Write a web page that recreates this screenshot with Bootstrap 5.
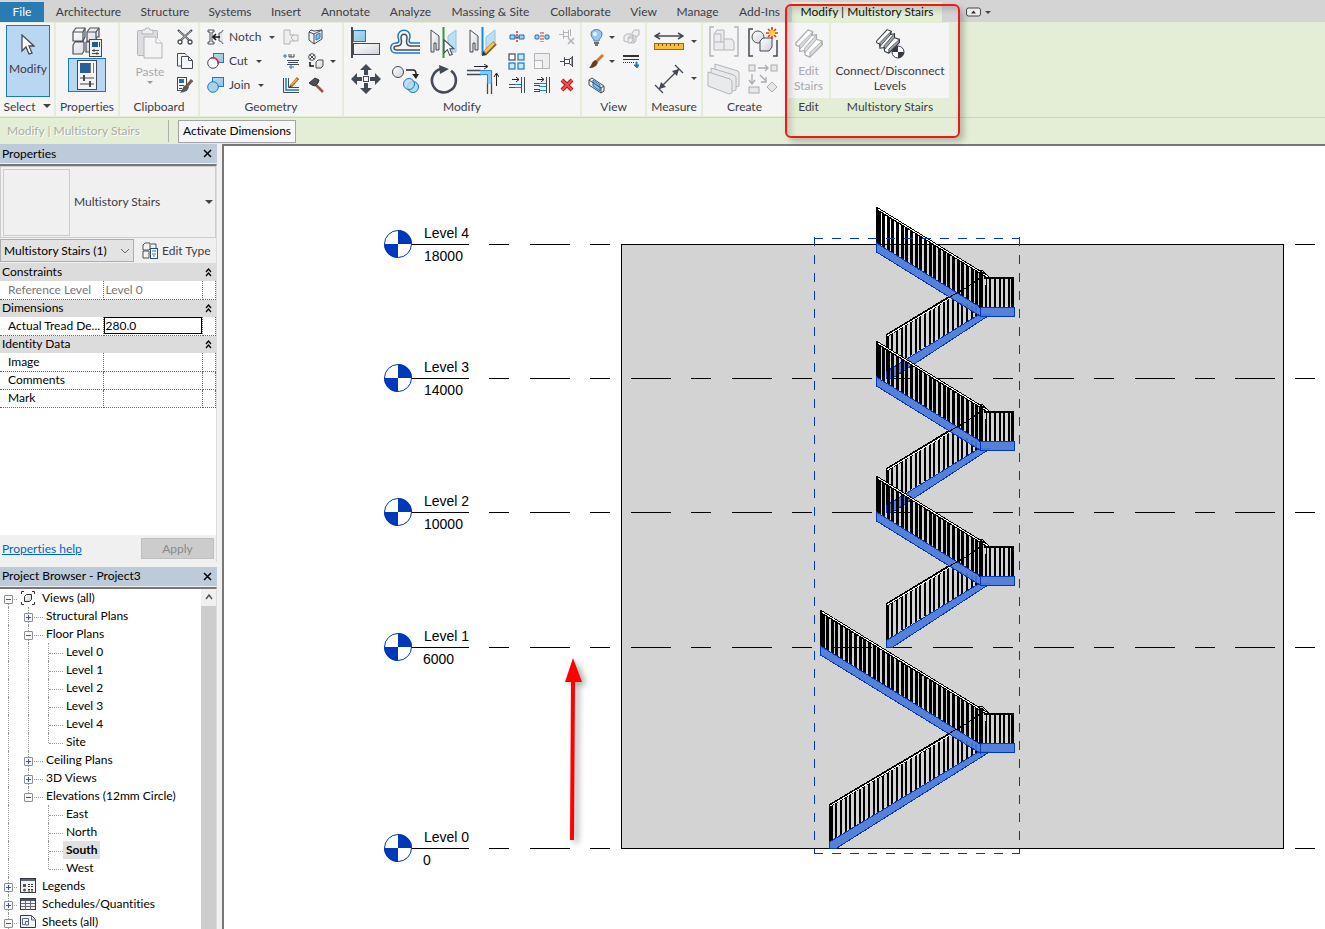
<!DOCTYPE html>
<html lang="en">
<head>
<meta charset="utf-8">
<meta name="viewport" content="width=device-width, initial-scale=1">
<title>Project3 - Elevation: South</title>
<link href="https://cdn.jsdelivr.net/npm/bootstrap@5.3.0/dist/css/bootstrap.min.css" rel="stylesheet">
<script src="https://cdn.jsdelivr.net/npm/bootstrap@5.3.0/dist/js/bootstrap.bundle.min.js"></script>
<style>
  :root { --ctx: #e4eed6; --panel: #f5f5f5; --ink: #3c3c46; --pane: #f0f0f0; }
  body { font-family: Lato, "Open Sans", sans-serif; font-size: 12px; line-height: 18px; font-variant-ligatures: none; color: #000; background: var(--pane); }
  svg { display: block; flex: none; }
  button, select, input { font: inherit; color: inherit; }
  .btn { --bs-btn-font-size: 12px; --bs-btn-line-height: 18px; --bs-btn-color: var(--ink); --bs-btn-border-radius: 0; --bs-btn-padding-x: 0; --bs-btn-padding-y: 0; --bs-btn-border-width: 0; --bs-btn-disabled-color: #a9a9ae; --bs-btn-disabled-opacity: 1; }

  /* tabs */
  .tabs { background: #d4d4d4; height: 22px; padding-top: 2px; color: var(--ink); }
  .tabs a { color: inherit; text-decoration: none; line-height: 20px; white-space: nowrap; flex: none; text-align: center; }
  .tabs .file-tab { background: #2a7ab3; color: #fff; width: 44px; }
  .tabs .ctx-tab { background: var(--ctx); color: #111; }
  .tab-set { display: grid; grid-template-columns: 89px 64px 66px 46px 73px 57px 103px 77px 49px 59px 65px 150px; }

  /* ribbon */
  .ribbon { display: grid; grid-template-columns: 56px 64px 80px 144px 238px 65px 56px 85px 43px 120px; background: var(--ctx); height: 96px; padding-top: 1px; border-bottom: 1px solid #cdd0cf; }
  .rpanel { background: var(--panel); border-right: 2px solid var(--ctx); color: var(--ink); display: flex; flex-direction: column; height: 93px; }
  .rpanel > footer { line-height: 18px; text-align: center; white-space: nowrap; }
  .rpanel > div { height: 75px; }
  .rpanel.ctx-panel > footer { background: var(--ctx); }
  .big-grid { display: grid; grid-auto-rows: 37px; place-items: center; }
  .small-grid { display: grid; grid-auto-rows: 24px; grid-auto-columns: 25px; place-items: center; padding-top: 2px; }
  .tight { gap: 2px; padding-left: 2px; }
  .caret { width: 0; height: 0; border: 3px solid transparent; border-top-color: #444; border-bottom: 0; display: inline-block; flex: none; }
  .caret-lg { border-width: 4px; border-bottom: 0; }
  .caret-off { border-top-color: #999; }
  .lit { background: #b9d6f2; border: 1px solid #1a78c8 !important; }
  .modify-btn { width: 44px; height: 72px; margin: 2px 0 0 6px; }
  .mark-box { position: absolute; left: 785px; top: 4px; width: 175px; height: 134px; border: 2px solid #f31616; border-radius: 6px; box-shadow: 4px 4px 6px rgba(0,0,0,.22), inset 4px 4px 6px rgba(0,0,0,.16); pointer-events: none; }

  /* options bar */
  .options { background: var(--ctx); height: 26px; }
  .options .ctx-name { color: #a9aca6; text-shadow: 1px 1px 0 #fff; width: 168px; padding-left: 7px; }
  .options .rule { width: 1px; height: 22px; background: #aeb0ac; }
  .options .btn { border: 1px solid #a3a3a8; background: #f7f7f7; color: #000; height: 23px; width: 118px; margin-left: 9px; }

  /* docked panes */
  .dock { width: 222px; padding-right: 5px; }
  .pane-title { background: #bccad9; height: 19px; padding: 0 5px 0 2px; }
  .pane-body { border-top: 2px solid #777; border-right: 1px solid #ddd; margin-top: 1px; }
  .props-body { margin-bottom: 5px; }
  .type-pick { height: 72px; border: 1px solid #ccc; padding: 2px; }
  .type-thumb { width: 67px; height: 67px; border: 1px solid #ccc; }
  .inst-row { height: 25px; }
  .inst-pick { width: 134px; height: 23px; border: 1px solid #adadad; background: #e3e3e3 url("data:image/svg+xml,%3Csvg xmlns='http://www.w3.org/2000/svg' width='10' height='6'%3E%3Cpath d='M1 1l4 4 4-4' fill='none' stroke='%23666'/%3E%3C/svg%3E") no-repeat right 3px center; appearance: none; padding: 0 0 0 3px; border-radius: 0; }
  .grid-area { background: #fff; min-height: 272px; }
  .help-row { height: 27px; padding: 0 2px; }
  .help-row a { color: #0066cc; }
  .props { width: 100%; table-layout: fixed; border-collapse: collapse; }
  .props tr { height: 18px; }
  .props th, .props td { padding: 0; font-weight: 400; line-height: 16px; white-space: nowrap; overflow: hidden; }
  .props .grp th { background: #dcdcdc; padding-left: 2px; }
  .props .row-p > * { border-bottom: 1px dotted #666; border-right: 1px dotted #666; }
  .props .row-p th { padding-left: 8px; }
  .props .row-p td { padding-left: 2px; }
  .props .row-p td.edit { padding: 0; }
  .props .dim { color: #777; }
  .props input { border: 1px solid #000; width: 100%; height: 17px; padding: 0 0 0 1px; display: block; border-radius: 0; }
  .apply-btn.btn { width: 73px; height: 21px; background: #ccc; border: 1px solid #bfbfbf; color: #8a8a8a; }

  /* project browser */
  .tree { background: #fff; overflow: hidden; }
  .tree ul { list-style: none; margin: 0; padding: 0; }
  .tree li > div { display: flex; height: 18px; white-space: nowrap; }
  .gd { width: 20px; flex: none; position: relative; }
  .gd.ln::before, .gd.half::before, .gd.low::before { content: ""; position: absolute; left: 8px; top: 0; bottom: 0; border-left: 1px dotted #999; }
  .gd.half::before { bottom: 8px; }
  .gd.low::before { top: 10px; }
  .gd.wide { width: 26px; }
  .gd.arm::after { content: ""; position: absolute; left: 9px; right: 3px; top: 10px; border-top: 1px dotted #999; }
  .knob { position: absolute; left: 4px; top: 6px; width: 9px; height: 9px; padding: 0; border: 1px solid #8f8f8f; border-radius: 1px; background: linear-gradient(#3a55a8, #3a55a8) center/5px 1px no-repeat, #f8f8f8; z-index: 1; }
  .knob.plus { background: linear-gradient(#3a55a8, #3a55a8) center/5px 1px no-repeat, linear-gradient(#3a55a8, #3a55a8) center/1px 5px no-repeat, #f8f8f8; }
  .tree svg { margin: 1px 6px 0 0; }
  .picked { background: #e0e0e0; font-weight: 700; margin-left: -3px; padding: 0 3px; }
  .vbar { width: 15px; background: #cdcdcd; flex: none; }
  .vbar button { width: 15px; height: 17px; background: var(--pane); border: 0; padding: 0; }

  .sheet { background: #fff; border-left: 2px solid #777; border-top: 2px solid #777; min-width: 0; }
  .sheet text { font: 14px "Liberation Sans", Arial, sans-serif; }
</style>
</head>
<body class="vh-100 d-flex flex-column overflow-hidden">

<svg width="0" height="0" class="position-absolute" aria-hidden="true">
  <defs>
    <linearGradient id="gw" x1="0" y1="0" x2="1" y2="1"><stop stop-color="#fff"/><stop offset="1" stop-color="#cfd2d8"/></linearGradient>
    <linearGradient id="gb" x1="0" y1="0" x2="1" y2="1"><stop stop-color="#b9dcf0"/><stop offset="1" stop-color="#8cc4e6"/></linearGradient>
    <symbol id="arrow-cursor" viewBox="0 0 14 22"><path d="M1 1v16l4-4 3 7 3-1-3-7h5z" fill="#fff" stroke="#444a55" stroke-width="1.3"/></symbol>
    <symbol id="stair-steps" viewBox="0 0 32 32">
      <path d="M2 16L15 2l5 2-1 4 5-1 0 5 6 2v4L17 31l-5-2-1-5-5 1v-5l-4-2z" fill="#fff" stroke="currentColor" stroke-width="1.300" stroke-linejoin="round"/>
      <path d="M6 18L20 4l-1 4L6 23zM11 22L24 7v5L12 26zM17 26L30 14v4L17 31z" fill="currentColor" fill-opacity=".45" stroke="currentColor" stroke-linejoin="round"/>
    </symbol>
  </defs>
</svg>

<header class="position-relative flex-shrink-0">
  <nav class="tabs d-flex" aria-label="Ribbon tabs">
    <a class="file-tab" href="#">File</a>
    <div class="tab-set">
      <a href="#">Architecture</a><a href="#">Structure</a><a href="#">Systems</a><a href="#">Insert</a><a href="#">Annotate</a><a href="#">Analyze</a><a href="#">Massing &amp; Site</a><a href="#">Collaborate</a><a href="#">View</a><a href="#">Manage</a><a href="#">Add-Ins</a><a class="ctx-tab" href="#">Modify | Multistory Stairs</a>
    </div>
    <button class="btn d-flex align-items-center ms-4 gap-1" aria-label="Minimize ribbon">
      <svg width="15" height="10"><rect x=".5" y="1" width="14" height="8" rx="2" fill="#eee" stroke="#444"/><path d="M5 6.500l2.500-3 2.500 3z" fill="#333"/></svg><span class="caret"></span>
    </button>
  </nav>

  <div class="ribbon">
    <section class="rpanel">
      <div>
        <button class="btn lit modify-btn d-flex flex-column align-items-center">
          <svg class="mt-2" width="14" height="22"><use href="#arrow-cursor"/></svg><span class="mt-1">Modify</span>
        </button>
      </div>
      <footer>Select <span class="caret caret-lg ms-1 mb-1 align-middle"></span></footer>
    </section>

    <section class="rpanel">
      <div class="d-flex flex-column align-items-center pt-1">
        <button class="btn" aria-label="Type properties">
          <svg width="32" height="31" viewBox="0 0 32 31"><g fill="url(#gw)" stroke="#4b4f58" stroke-width="1.200" stroke-linejoin="round"><path d="M2 5l3-4h9v9l-2 4H2zM16 5l3-4h9v9h-2l-2 4h-8zM2 18l2-3h9v9l-2 3H2zM15 15h4v10h-4z"/><path d="M2 5h10v9M12 5l2-4M16 5h9v6M25 5l3-4" fill="none"/></g><rect x="18.500" y="12.500" width="12" height="17" fill="#eef1f4" stroke="#444a55"/><rect x="21" y="15" width="6" height="5" fill="#235a94"/><path d="M28.500 15v5M21 23.500h7M21 26.500h7" stroke="#444"/><path d="M23 22v3M26 25v3" stroke="#444"/></svg>
        </button>
        <button class="btn lit px-2" aria-label="Properties palette">
          <svg width="20" height="32" viewBox="0 0 20 32"><rect x=".5" y="1.500" width="19" height="29" fill="#f2f4f6" stroke="#444a55"/><rect x="3" y="4" width="10" height="10" fill="#275f99"/><path d="M13.500 4v10M16.500 4v10" stroke="#777"/><path d="M3 19h14M3 25h14" stroke="#444a55"/><path d="M7 16v6M13 22v6" stroke="#444a55" stroke-width="2"/></svg>
        </button>
      </div>
      <footer>Properties</footer>
    </section>

    <section class="rpanel">
      <div class="d-flex">
        <button class="btn d-flex flex-column align-items-center ms-2 px-1 pt-1" style="width:44px" disabled>
          <svg width="28" height="32" viewBox="0 0 28 32"><rect x="1.500" y="3.500" width="20" height="25" rx="1" fill="#dcdde0" stroke="#b3b5ba"/><path d="M6 7V3h3l1-2h3l1 2h3v4z" fill="#eee" stroke="#b3b5ba"/><path d="M8 10h12l6 6v15H8z" fill="#f4f4f5" stroke="#b3b5ba"/><path d="M20 10v6h6" fill="#fff" stroke="#b3b5ba"/></svg>
          <span class="mt-1">Paste</span><span class="caret caret-off"></span>
        </button>
        <div class="small-grid">
          <button class="btn" aria-label="Cut to clipboard"><svg width="16" height="16" viewBox="0 0 16 16"><path d="M1 1l11 10M15 1L4 11" stroke="#444a55" stroke-width="2"/><path d="M2 2l10 9M14 2L4 11" stroke="#fff" stroke-width=".6"/><circle cx="3" cy="13" r="2" fill="#fff" stroke="#444a55" stroke-width="1.300"/><circle cx="13" cy="13" r="2" fill="#fff" stroke="#444a55" stroke-width="1.300"/></svg></button>
          <button class="btn" aria-label="Copy to clipboard"><svg width="16" height="16" viewBox="0 0 16 16"><path d="M4 13H.5V.5H8l2 2" fill="#f5f6f7" stroke="#444a55"/><path d="M4.500 3.500h7l4 4v8h-11z" fill="#f5f6f7" stroke="#444a55"/><path d="M11.500 3.500v4h4" fill="none" stroke="#444a55"/></svg></button>
          <button class="btn" aria-label="Match type"><svg width="16" height="16" viewBox="0 0 16 16"><rect x=".5" y=".5" width="9" height="13" fill="#fff" stroke="#444a55"/><rect x="2" y="2" width="5" height="4" fill="#2b6cb0"/><path d="M2 8.500h5M2 11.500h3" stroke="#444"/><path d="M15 3l-5 6" stroke="#7a5a4a" stroke-width="3"/><path d="M9 8l3 2c-1 4-4 5-9 6 3-3 2-7 6-8z" fill="#555b66"/></svg></button>
        </div>
      </div>
      <footer>Clipboard</footer>
    </section>

    <section class="rpanel">
      <div class="d-flex ps-1">
        <div class="small-grid justify-content-start" style="justify-items:start;padding-left:3px">
          <button class="btn d-flex align-items-center"><svg class="me-1" width="18" height="16" viewBox="0 0 18 16"><path d="M1 1h6v2H5v10h2v2H1v-2h2V3H1z" fill="#fff" stroke="#444a55"/><path d="M16 1c-1 3-4 3-4 3v8s3 0 4 3" fill="#e5e7ea" stroke="#444a55"/><path d="M13 8H7M9 5L6 8l3 3" stroke="#111" fill="none" stroke-width="1.500"/></svg>Notch<span class="caret ms-2"></span></button>
          <button class="btn d-flex align-items-center"><svg class="me-1" width="18" height="16" viewBox="0 0 18 16"><rect x="6.500" y=".5" width="10" height="9" fill="url(#gb)" stroke="#1a78c8"/><circle cx="6" cy="10" r="5.300" fill="#fff" stroke="#444a55"/><path d="M4 5a5.300 5.300 0 0 1 7 6" stroke="#e02020" stroke-width="1.500" fill="none"/></svg>Cut<span class="caret ms-2"></span></button>
          <button class="btn d-flex align-items-center"><svg class="me-1" width="18" height="16" viewBox="0 0 18 16"><rect x="5.500" y=".5" width="11" height="9" fill="url(#gb)" stroke="#1a78c8"/><circle cx="6" cy="10" r="5.300" fill="#a9d3ec" stroke="#1a78c8"/></svg>Join<span class="caret ms-2"></span></button>
        </div>
        <div class="small-grid flex-shrink-0 ms-auto me-1" style="grid-template-columns:25px 25px 10px">
          <button class="btn" aria-label="Beam joins" disabled><svg width="16" height="16" viewBox="0 0 16 16"><path d="M1 1h6v5h8v6H7v3H1z" fill="#eee" stroke="#b3b5ba"/><path d="M11 5l-3 4 3 3" stroke="#b3b5ba" fill="none"/></svg></button>
          <button class="btn" aria-label="Wall opening"><svg width="16" height="16" viewBox="0 0 16 16"><path d="M1 3l2-2 3 1 8-1v9l-8 5-5-4z" fill="#eef1f4" stroke="#444a55"/><path d="M6 5v10M1 3l5 2 8-4" fill="none" stroke="#444a55"/><path d="M8 6l4-2v5l-4 2z" fill="#86c0e8" stroke="#1a78c8"/></svg></button><span></span>
          <button class="btn" aria-label="Wall joins"><svg width="16" height="16" viewBox="0 0 16 16"><path d="M2 1v4M0 3h4M8 12v4M6 14h5" stroke="#1a78c8"/><path d="M6 1v3h5V1M8 1v3" stroke="#444" fill="none"/><path d="M4 7.500h12M4 11.500h12M5 9.500h10" stroke="#444a55"/></svg></button>
          <button class="btn" aria-label="Split face"><svg width="16" height="16" viewBox="0 0 16 16"><circle cx="4" cy="4" r="3.300" fill="#fff" stroke="#444a55"/><path d="M2 2l4 4M6 2L2 6" stroke="#444a55"/><path d="M2 9v4h4" stroke="#111" fill="none" stroke-width="1.500"/><path d="M8 9l2-2h5v6l-2 2H8z" fill="url(#gw)" stroke="#444a55"/></svg></button><span class="caret"></span>
          <button class="btn" aria-label="Edit wall joins"><svg width="16" height="16" viewBox="0 0 16 16"><path d="M.5 1v14.500H16M5.500 1v9.500H16" stroke="#444a55" fill="none"/><path d="M3 1v12h13" stroke="#1a78c8" stroke-width="1.500" fill="none"/><path d="M15 1L8 9" stroke="#b06a18" stroke-width="3"/><path d="M14 2L8 8" stroke="#f0b545" stroke-width="1.500"/><path d="M6 11l1-3 2 2z" fill="#333"/></svg></button>
          <button class="btn" aria-label="Demolish"><svg width="16" height="16" viewBox="0 0 16 16"><path d="M7 7l8 8" stroke="#8b5a4a" stroke-width="2.500"/><path d="M1 6l6-5 4 2-1 3-3 3-3-1z" fill="#4b4f58" stroke="#333"/></svg></button><span></span>
        </div>
      </div>
      <footer>Geometry</footer>
    </section>

    <section class="rpanel">
      <div class="d-flex tight">
        <div class="big-grid" style="grid-template-columns:repeat(4,39px)">
          <button class="btn" aria-label="Align"><svg width="30" height="32" viewBox="0 0 30 32"><path d="M1 1v31" stroke="#111" stroke-width="1.500"/><rect x="2.500" y="4.500" width="12" height="11" fill="url(#gb)" stroke="#1a78c8"/><rect x="2.500" y="17.500" width="26" height="11" fill="url(#gw)" stroke="#444a55"/></svg></button>
          <button class="btn" aria-label="Offset"><svg width="30" height="28" viewBox="0 0 30 28"><g fill="none" stroke-width="1.500"><path d="M30 15h-8c-4 0-3-3-2-6 1-9-13-9-12 0 1 3 2 6-2 6-7 0-7 10 0 10h24" stroke="#1a78c8"/><path d="M30 18h-9c-5 0-5-4-4-8 0-5-6-5-6 0 1 4 1 8-4 8-4 0-4 4 0 4h23" stroke="#4b4f58"/></g></svg></button>
          <button class="btn" aria-label="Mirror - pick axis"><svg width="30" height="32" viewBox="0 0 30 32"><path d="M2 4l8 6v14H7v-7H5v9H2z" fill="url(#gw)" stroke="#444a55"/><path d="M27 4l-8 6v10h4v6h4z" fill="#bcdff2" stroke="#8cc4e6"/><path d="M14.500 1v31" stroke="#3a9a3a" stroke-width="2"/><use href="#arrow-cursor" x="14" y="13" width="12" height="18"/></svg></button>
          <button class="btn" aria-label="Mirror - draw axis"><svg width="30" height="32" viewBox="0 0 30 32"><path d="M2 4l8 6v14H7v-7H5v9H2z" fill="url(#gw)" stroke="#444a55"/><path d="M27 4l-9 7v14h4v-5h5z" fill="#bcdff2" stroke="#8cc4e6"/><path d="M14.500 1v28" stroke="#1a88e0" stroke-width="2"/><path d="M27 17L17 27" stroke="#8a5a18" stroke-width="5"/><path d="M26 17L17 26" stroke="#f7c25a" stroke-width="3"/><path d="M14 30l1-5 4 4z" fill="#333"/></svg></button>
          <button class="btn" aria-label="Move"><svg width="30" height="30" viewBox="0 0 30 30"><g fill="#444a55"><path id="mv" d="M15 0l6 6h-4v5h-4V6H9z"/><use href="#mv" transform="rotate(90 15 15)"/><use href="#mv" transform="rotate(180 15 15)"/><use href="#mv" transform="rotate(270 15 15)"/></g><rect x="12.500" y="12.500" width="5" height="5" fill="#fff" stroke="#444a55"/></svg></button>
          <button class="btn" aria-label="Copy"><svg width="28" height="30" viewBox="0 0 28 30"><circle cx="7" cy="8" r="5.500" fill="url(#gw)" stroke="#444a55"/><path d="M15 6h7q3 0 3 4v2" fill="none" stroke="#222" stroke-width="1.500"/><path d="M21 10h7l-3 5z" fill="#222"/><circle cx="22" cy="23" r="5.500" fill="#b6daf0" stroke="#1a78c8"/><circle cx="18" cy="20" r="5.500" fill="#b6daf0" stroke="#1a78c8" fill-opacity=".8"/></svg></button>
          <button class="btn" aria-label="Rotate"><svg width="28" height="30" viewBox="0 0 28 30"><path d="M19 5.500a12 12 0 1 1-10 0" transform="rotate(12 14 16)" fill="none" stroke="#444a55" stroke-width="2.600"/><path d="M9 1l10 4-9 5z" fill="#444a55"/></svg></button>
          <button class="btn" aria-label="Trim or extend to corner"><svg width="32" height="30" viewBox="0 0 32 30"><path d="M0 6.500h14M0 10.500h14M20.500 18v12M24.500 18v12" stroke="#444a55" stroke-width="1.300"/><path d="M13 8.500h9.500V20" stroke="#8cc8f4" stroke-width="4" fill="none"/><path d="M13 6.500h11.500V20M13 10.500h7.500V20" stroke="#1a88e0" fill="none"/><path d="M7 2.500h13M17 0l4 2.500-4 2.500M29.500 22V10M27 13l2.500-4 2.500 4" stroke="#222" fill="none"/></svg></button>
        </div>
        <div class="small-grid" style="grid-template-columns:repeat(3,25px)">
          <button class="btn" aria-label="Split element"><svg width="16" height="16" viewBox="0 0 16 16"><path d="M1 6h5v4H1zM10 6h5v4h-5z" fill="#a9d3ec" stroke="#1a6aa8"/><path d="M8 2v12" stroke="#d03020" stroke-width="1.500" stroke-dasharray="2 1"/><path d="M5 8h6" stroke="#1a6aa8"/></svg></button>
          <button class="btn" aria-label="Split with gap"><svg width="16" height="16" viewBox="0 0 16 16"><rect x="1" y="6" width="4" height="4" rx="1" fill="#a9d3ec" stroke="#1a6aa8"/><rect x="11" y="6" width="4" height="4" rx="1" fill="#a9d3ec" stroke="#1a6aa8"/><path d="M7 3v10M9 3v10" stroke="#d03020" stroke-dasharray="2 1"/></svg></button>
          <button class="btn" aria-label="Unpin" disabled><svg width="16" height="16" viewBox="0 0 16 16"><path d="M0 5.500h4M4.500 1v9M4 3.500h5M4 7.500h5M9.500 1v8M11.500 0v7" stroke="#b3b5ba" fill="none"/><path d="M9 9l6 6M15 9l-6 6" stroke="#b3b5ba" stroke-width="1.600"/></svg></button>
          <button class="btn" aria-label="Array"><svg width="17" height="17" viewBox="0 0 17 17"><g fill="#d3e8f5" stroke="#1a78c8" stroke-width="1.200"><rect x="1" y="1" width="6" height="6" fill="#fff" stroke="#444a55"/><rect x="10" y="1" width="6" height="6"/><rect x="1" y="10" width="6" height="6"/><rect x="10" y="10" width="6" height="6"/></g></svg></button>
          <button class="btn" aria-label="Scale" disabled><svg width="16" height="16" viewBox="0 0 16 16"><path d="M.5 7V.5h15v15H9" fill="#eee" stroke="#b3b5ba"/><rect x=".5" y="7.500" width="8" height="8" fill="#f7f7f7" stroke="#b3b5ba"/></svg></button>
          <button class="btn" aria-label="Pin"><svg width="16" height="16" viewBox="0 0 16 16"><path d="M1 8.500h4M5.500 4v9M5 6.500h5l3-2v8l-3-2H5" stroke="#444a55" fill="#fff"/><path d="M10.500 6v5M13.500 3v11" stroke="#444a55"/></svg></button>
          <button class="btn" aria-label="Trim single element"><svg width="16" height="16" viewBox="0 0 16 16"><path d="M3 2.500h7M7 0l3 2.500L7 5" stroke="#222" fill="none"/><path d="M0 7.500h6M0 10.500h6" stroke="#444a55"/><path d="M6 7.500h6M6 10.500h6" stroke="#1a88e0"/><path d="M12.500 0v16M15.500 0v16" stroke="#444a55"/></svg></button>
          <button class="btn" aria-label="Trim multiple elements"><svg width="16" height="16" viewBox="0 0 16 16"><path d="M3 2.500h7M7 0l3 2.500L7 5" stroke="#222" fill="none"/><path d="M0 6.500h6M0 8.500h6M0 12.500h6M0 14.500h6" stroke="#444a55"/><path d="M5 6.500h7M5 9.500h7M5 13.500h7" stroke="#1a88e0"/><path d="M12.500 0v16M15.500 0v16" stroke="#444a55"/></svg></button>
          <button class="btn" aria-label="Delete"><svg width="14" height="14" viewBox="0 0 14 14"><path d="M2 2l10 10M12 2L2 12" stroke="#b01818" stroke-width="4"/><path d="M2 2l10 10M12 2L2 12" stroke="#f05050" stroke-width="2"/></svg></button>
        </div>
      </div>
      <footer>Modify</footer>
    </section>

    <section class="rpanel">
      <div class="small-grid justify-content-center ps-1" style="grid-template-columns:20px 11px 28px">
        <button class="btn" aria-label="Hide in view"><svg width="16" height="17" viewBox="0 0 16 17"><path d="M6 12c0-3-3-3-3-7 0-6 11-6 11 0 0 4-3 4-3 7z" fill="#9cc6ee" stroke="#4b7fb5"/><path d="M6 14h5M7 16h3" stroke="#444" stroke-width="1.500"/><circle cx="7" cy="5" r="2" fill="#e6f3fd"/></svg></button>
        <span class="caret"></span>
        <button class="btn" aria-label="Displace elements" disabled><svg width="17" height="16" viewBox="0 0 17 16"><path d="M1 7l3-2h6v6l-2 3M1 7v5l3 1M5 9h6v5H5zM5 9l2-2h6v5l-2 2M9 4l2-3h5v5l-3 2" fill="#eee" stroke="#b3b5ba"/></svg></button>
        <button class="btn" aria-label="Override graphics"><svg width="16" height="16" viewBox="0 0 16 16"><path d="M15 2L9 8" stroke="#c87a35" stroke-width="3"/><path d="M8 7l2 2c-1 4-4 6-9 6 3-2 2-7 7-8z" fill="#6b3d24"/></svg></button>
        <span class="caret"></span>
        <button class="btn" aria-label="Linework"><svg width="16" height="16" viewBox="0 0 16 16"><path d="M0 3h16" stroke="#333" stroke-width="2"/><path d="M0 6.500h16" stroke="#333"/><path d="M0 9.500h12" stroke="#333" stroke-dasharray="1 1"/><path d="M13 9v3h-2l3 3 2-3h-2V9z" fill="#1a78c8" stroke="#1a78c8"/></svg></button>
        <button class="btn" aria-label="Selection box"><svg width="17" height="17" viewBox="0 0 17 17"><path d="M1 3l3-2 12 8v5l-3 2L1 8z" fill="#eef1f4" stroke="#444a55"/><path d="M5 3l7 5v6L5 9z" fill="#86c0e8" stroke="#1a78c8"/><path d="M1 3l12 8v5M13 11l3-2" fill="none" stroke="#444a55"/></svg></button>
      </div>
      <footer>View</footer>
    </section>

    <section class="rpanel">
      <div class="big-grid" style="grid-template-columns:43px 8px">
        <button class="btn" aria-label="Measure"><svg width="30" height="24" viewBox="0 0 30 24"><path d="M1 6h28M6 3L1 6l5 3M24 3l5 3-5 3" stroke="#444a55" fill="none" stroke-width="1.500"/><rect x=".5" y="13.500" width="29" height="6" fill="#f5bd3a" stroke="#9a6a10"/><path d="M4.500 14v2M8.500 14v2M12.500 14v2M16.500 14v2M20.500 14v2M24.500 14v2" stroke="#7a5208"/></svg></button><span class="caret"></span>
        <button class="btn" aria-label="Aligned dimension"><svg width="30" height="30" viewBox="0 0 30 30"><path d="M5 25L25 5M1 21l8 8M21 1l8 8" stroke="#444a55" stroke-width="1.300"/><path d="M5 25l2-7 5 5zM25 5l-7 2 5 5z" fill="#444a55"/></svg></button><span class="caret"></span>
      </div>
      <footer>Measure</footer>
    </section>

    <section class="rpanel">
      <div class="big-grid tight justify-content-start" style="grid-template-columns:37px 37px;column-gap:2px;row-gap:0">
        <button class="btn" aria-label="Create group" disabled><svg width="30" height="32" viewBox="0 0 30 32"><path d="M5 1H1v29h4M25 1h4v29h-4" fill="none" stroke="#b3b5ba" stroke-width="1.500"/><path d="M5 8l3-4h7v9h8l2 3v8H5zM5 16h10v8M15 13v3M5 8h7v8" fill="#ececee" stroke="#b3b5ba"/></svg></button>
        <button class="btn" aria-label="Create similar"><svg width="32" height="32" viewBox="0 0 32 32"><path d="M6 3H2v27h4M26 30h4V14" fill="none" stroke="#444a55" stroke-width="1.500"/><circle cx="11" cy="11" r="6" fill="url(#gw)" stroke="#555"/><path d="M13 15l3-3h9v9l-3 4h-9z" fill="url(#gw)" stroke="#444a55"/><path d="M25 1v12M19 7h12M21 3l8 8M29 3l-8 8" stroke="#e03a10" stroke-width="1.600"/><circle cx="25" cy="7" r="3" fill="#ffd23c"/></svg></button>
        <button class="btn" aria-label="Create assembly" disabled><svg width="34" height="32" viewBox="0 0 34 32"><g fill="#e9eaec" stroke="#b3b5ba" stroke-linejoin="round"><path d="M8 1l23 7 1 2v13l-3 1L8 15z"/><path d="M4 5l23 7 2 2v13l-3 1L4 19z"/><path d="M1 9l22 7 2 2v12l-3 1L1 23z"/></g></svg></button>
        <button class="btn" aria-label="Create parts" disabled><svg width="30" height="30" viewBox="0 0 30 30"><g fill="#e6e7e9" stroke="#a9abb0"><rect x="1" y="1" width="6" height="6"/><rect x="23" y="1" width="6" height="6"/><rect x="1" y="23" width="10" height="6"/><path d="M24 18l5 5-5 5-5-5z"/></g><path d="M10 4h10M17 1l3 3-3 3M4 10v9M1 16l3 4 3-4M12 11l6 6M18 13v5h-5" stroke="#a9abb0" fill="none" stroke-width="1.300"/></svg></button>
      </div>
      <footer>Create</footer>
    </section>

    <section class="rpanel ctx-panel">
      <div class="text-center">
        <button class="btn pt-1" disabled><svg class="mx-auto" width="30" height="32" color="#aaacb0"><use href="#stair-steps" width="30" height="32"/></svg><span class="d-block mt-1 lh-sm">Edit<br>Stairs</span></button>
      </div>
      <footer>Edit</footer>
    </section>

    <section class="rpanel ctx-panel">
      <div class="text-center">
        <button class="btn pt-1"><svg class="mx-auto" width="30" height="32" color="#333844"><use href="#stair-steps" width="26" height="28"/><circle cx="23" cy="25" r="6" fill="#fff" stroke="#333844"/><path d="M23 25v-6a6 6 0 0 0-6 6zM23 25v6a6 6 0 0 0 6-6z" fill="#333844"/></svg><span class="d-block mt-1 lh-sm">Connect/Disconnect<br>Levels</span></button>
      </div>
      <footer>Multistory Stairs</footer>
    </section>
  </div>

  <div class="options d-flex align-items-center">
    <span class="ctx-name">Modify | Multistory Stairs</span><span class="rule"></span>
    <button class="btn">Activate Dimensions</button>
  </div>
  <div class="mark-box"></div>
</header>

<main class="d-flex flex-fill" style="min-height:0">
  <aside class="dock d-flex flex-column flex-shrink-0">
    <section class="flex-shrink-0">
      <div class="pane-title d-flex justify-content-between align-items-center"><span>Properties</span>
        <button class="btn" aria-label="Close properties"><svg width="9" height="9"><path d="M1 1l7 7M8 1L1 8" stroke="#000" stroke-width="1.500"/></svg></button></div>
      <div class="pane-body props-body">
        <button class="btn type-pick d-flex align-items-center w-100">
          <span class="type-thumb me-1"></span><span class="flex-fill text-start">Multistory Stairs</span><span class="caret caret-lg"></span>
        </button>
        <div class="inst-row d-flex align-items-center">
          <select class="inst-pick" aria-label="Selected instances"><option>Multistory Stairs (1)</option></select>
          <button class="btn d-flex align-items-center ms-2 text-nowrap"><svg class="me-1" width="16" height="17" viewBox="0 0 16 17"><path d="M1 3l2-2h5v6L7 8H1zM9 2h5v5M1 9h6v7H1z" fill="#f4f4f6" stroke="#4b4f58"/><rect x="8.500" y="6.500" width="7" height="10" fill="#fff" stroke="#2b4f80"/><path d="M10 9h4M10 12h4M11 14h2" stroke="#1a78c8"/></svg>Edit Type</button>
        </div>
        <div class="grid-area">
          <table class="props">
            <colgroup><col style="width:103px"><col><col style="width:13px"></colgroup>
            <tbody>
            <tr class="grp"><th colspan="2" scope="colgroup">Constraints</th><th><svg width="7" height="9"><path d="M1 4l2.500-3L6 4M1 8l2.500-3L6 8" stroke="#000" stroke-width="1.300" fill="none"/></svg></th></tr>
            <tr class="row-p dim"><th scope="row">Reference Level</th><td>Level 0</td><td></td></tr>
            <tr class="grp"><th colspan="2" scope="colgroup">Dimensions</th><th><svg width="7" height="9"><path d="M1 4l2.500-3L6 4M1 8l2.500-3L6 8" stroke="#000" stroke-width="1.300" fill="none"/></svg></th></tr>
            <tr class="row-p"><th scope="row"><label class="d-block" for="tread">Actual Tread De...</label></th><td class="edit"><input id="tread" value="280.0"></td><td></td></tr>
            <tr class="grp"><th colspan="2" scope="colgroup">Identity Data</th><th><svg width="7" height="9"><path d="M1 4l2.500-3L6 4M1 8l2.500-3L6 8" stroke="#000" stroke-width="1.300" fill="none"/></svg></th></tr>
            <tr class="row-p"><th scope="row">Image</th><td></td><td></td></tr>
            <tr class="row-p"><th scope="row">Comments</th><td></td><td></td></tr>
            <tr class="row-p"><th scope="row">Mark</th><td></td><td></td></tr>
            </tbody>
          </table>
        </div>
        <div class="help-row d-flex align-items-center justify-content-between">
          <a href="#">Properties help</a>
          <button class="btn apply-btn" disabled>Apply</button>
        </div>
      </div>
    </section>

    <section class="d-flex flex-column flex-fill" style="min-height:0">
      <div class="pane-title d-flex justify-content-between align-items-center"><span>Project Browser - Project3</span>
        <button class="btn" aria-label="Close project browser"><svg width="9" height="9"><path d="M1 1l7 7M8 1L1 8" stroke="#000" stroke-width="1.500"/></svg></button></div>
      <div class="pane-body d-flex flex-fill" style="min-height:0">
        <nav class="tree flex-fill" aria-label="Project browser">
          <ul>
            <li><div><span class="gd low arm"><button class="knob" aria-label="Collapse"></button></span><svg width="16" height="16" viewBox="0 0 16 16"><path d="M4 1.500H1.500V4M12 1.500h2.500V4M4 14.500H1.500V12M12 14.500h2.500V12" fill="none" stroke="#333"/><path d="M4.500 6.500l2-2h5v5l-2 2h-5z" fill="url(#gw)" stroke="#333"/></svg><span>Views (all)</span></div></li>
            <li><div><span class="gd ln"></span><span class="gd wide ln arm"><button class="knob plus" aria-label="Expand"></button></span><span>Structural Plans</span></div></li>
            <li><div><span class="gd ln"></span><span class="gd wide ln arm"><button class="knob" aria-label="Collapse"></button></span><span>Floor Plans</span></div></li>
            <li><div><span class="gd ln"></span><span class="gd ln"></span><span class="gd wide ln arm"></span><span>Level 0</span></div></li>
            <li><div><span class="gd ln"></span><span class="gd ln"></span><span class="gd wide ln arm"></span><span>Level 1</span></div></li>
            <li><div><span class="gd ln"></span><span class="gd ln"></span><span class="gd wide ln arm"></span><span>Level 2</span></div></li>
            <li><div><span class="gd ln"></span><span class="gd ln"></span><span class="gd wide ln arm"></span><span>Level 3</span></div></li>
            <li><div><span class="gd ln"></span><span class="gd ln"></span><span class="gd wide ln arm"></span><span>Level 4</span></div></li>
            <li><div><span class="gd ln"></span><span class="gd ln"></span><span class="gd wide half arm"></span><span>Site</span></div></li>
            <li><div><span class="gd ln"></span><span class="gd wide ln arm"><button class="knob plus" aria-label="Expand"></button></span><span>Ceiling Plans</span></div></li>
            <li><div><span class="gd ln"></span><span class="gd wide ln arm"><button class="knob plus" aria-label="Expand"></button></span><span>3D Views</span></div></li>
            <li><div><span class="gd ln"></span><span class="gd wide half arm"><button class="knob" aria-label="Collapse"></button></span><span>Elevations (12mm Circle)</span></div></li>
            <li><div><span class="gd ln"></span><span class="gd"></span><span class="gd wide ln arm"></span><span>East</span></div></li>
            <li><div><span class="gd ln"></span><span class="gd"></span><span class="gd wide ln arm"></span><span>North</span></div></li>
            <li><div><span class="gd ln"></span><span class="gd"></span><span class="gd wide ln arm"></span><span class="picked">South</span></div></li>
            <li><div><span class="gd ln"></span><span class="gd"></span><span class="gd wide half arm"></span><span>West</span></div></li>
            <li><div><span class="gd ln arm"><button class="knob plus" aria-label="Expand"></button></span><svg width="16" height="15" viewBox="0 0 16 15"><rect x=".5" y=".5" width="15" height="14" fill="#f2f2f2" stroke="#333a45"/><path d="M1 2h14" stroke="#5a6575" stroke-width="2"/><path d="M3 6h3v3H3z" fill="#555"/><circle cx="4.500" cy="12" r="1.500" fill="#555"/><path d="M8 6.500h5M8 8.500h5M8 11.500h5M8 13h5" stroke="#333" stroke-dasharray="2 1"/></svg><span>Legends</span></div></li>
            <li><div><span class="gd ln arm"><button class="knob plus" aria-label="Expand"></button></span><svg width="16" height="15" viewBox="0 0 16 15"><rect x=".5" y="2.500" width="15" height="11" fill="#f2f2f2" stroke="#333a45"/><path d="M1 4h14" stroke="#4b5666" stroke-width="2"/><path d="M1 7.500h14M1 10.500h14M5.500 5v9M10.500 5v9" stroke="#667"/></svg><span>Schedules/Quantities</span></div></li>
            <li><div><span class="gd ln arm"><button class="knob" aria-label="Collapse"></button></span><svg width="16" height="15" viewBox="0 0 16 15"><path d="M.5 1.500h11l4 4v8H.5z" fill="#f2f4f6" stroke="#333a45"/><path d="M2.500 4.500h6v3h-3v3h-3zM8.500 7v4h-3M11.500 2v4h4" fill="none" stroke="#5a6b80"/></svg><span>Sheets (all)</span></div></li>
          </ul>
        </nav>
        <div class="vbar"><button class="d-flex align-items-center justify-content-center" aria-label="Scroll up"><svg width="8" height="6"><path d="M1 5l3-4 3 4" fill="none" stroke="#555" stroke-width="1.500"/></svg></button></div>
      </div>
    </section>
  </aside>

  <section class="sheet flex-fill overflow-hidden" aria-label="South elevation">
    <svg width="100%" height="100%">
      <defs>
        <pattern id="bars" width="14" height="8" patternUnits="userSpaceOnUse"><path d="M0 0h3v8H0zM5 0h3v8H5zM9 0h3v8H9z"/></pattern>
        <pattern id="thin" width="14" height="8" patternUnits="userSpaceOnUse"><path d="M0 0h2v8H0zM5 0h2v8H5zM9 0h2v8H9z"/></pattern>
        <g id="head" fill="#0038bc"><circle r="13.500" fill="#fff" stroke="#0038bc"/><path d="M0 0v-14a14 14 0 0 1 14 14zM0 0v14a14 14 0 0 1-14-14z"/></g>
        <path id="datum" d="M489 0H1325" stroke="#000" stroke-dasharray="20 21 40 20 20 21 40 20 20 21 40 20 20 20 40 20"/>
        <!-- landing with its guard rail, shared by every storey -->
        <g id="landing">
          <path d="M986 277H1014V308H984z" fill="url(#thin)"/>
          <path d="M978 270h4l7 7h25" fill="none" stroke="#000"/>
          <path d="M984 277.500h30" stroke="#000" stroke-width="2"/>
          <path d="M979 272h4v36h-4zM1011 278h3v30h-3z"/>
          <path d="M948 298L966 288 980 278" fill="none" stroke="#000"/>
          <path d="M980 307.500H1014.500V316.500H980z" fill="#4a7ad8" fill-opacity=".92" stroke="#0038bc"/>
        </g>
        <g id="storey">
          <path d="M886 336L948 298 979 308V314L886 371z" fill="url(#thin)"/>
          <path d="M886 336h3v36h-3z"/>
          <path d="M886 336L950 297" stroke="#000" stroke-width="3"/><path d="M887 336L950 298" stroke="#fff"/>
          <path d="M886.500 371.500L980 314H991L892 378.500H886.500z" fill="#4a7ad8" fill-opacity=".92" stroke="#0038bc"/>
          <path d="M876 208L984 275V308H980L876 243z" fill="url(#bars)"/>
          <path d="M876 208l5 3v36l-5-3z"/>
          <path d="M876 208L988 277" stroke="#000" stroke-width="3"/><path d="M878 209L988 277" stroke="#fff"/>
          <path d="M876.500 243L980 307V316L876.500 252z" fill="#4a7ad8" fill-opacity=".92" stroke="#0038bc"/>
          <use href="#landing"/>
        </g>
      </defs>
      <g transform="translate(-224 -146)">
        <path d="M621.500 244.500H1283.500V848.500H621.500z" fill="#d3d3d3" stroke="#000" shape-rendering="crispEdges"/>
        <g shape-rendering="crispEdges">
          <use href="#datum" y="244.500"/><use href="#datum" y="378.500"/><use href="#datum" y="512.500"/><use href="#datum" y="647.500"/><use href="#datum" y="848.500"/>
          <path d="M411 244.500h58M411 378.500h58M411 512.500h58M411 647.500h58M411 848.500h58" stroke="#000"/>
        </g>
        <use href="#head" x="398" y="244"/><use href="#head" x="398" y="378"/><use href="#head" x="398" y="512"/><use href="#head" x="398" y="647"/><use href="#head" x="398" y="848"/>
        <text x="424" y="238">Level 4</text><text x="424" y="261">18000</text>
        <text x="424" y="372">Level 3</text><text x="424" y="395">14000</text>
        <text x="424" y="506">Level 2</text><text x="424" y="529">10000</text>
        <text x="424" y="641">Level 1</text><text x="423" y="664">6000</text>
        <text x="424" y="842">Level 0</text><text x="423" y="865">0</text>

        <g shape-rendering="crispEdges">
          <use href="#storey"/><use href="#storey" y="134"/><use href="#storey" y="269"/>
          <path d="M829 806L948 735 979 745V751L829 842z" fill="url(#thin)"/>
          <path d="M829 806h4v36h-4z"/>
          <path d="M829 806L950 734" stroke="#000" stroke-width="3"/><path d="M830 806L950 735" stroke="#fff"/>
          <path d="M829.500 842L980 751H991L836 848.500H829.500z" fill="#4a7ad8" fill-opacity=".92" stroke="#0038bc"/>
          <path d="M820 611L984 712V745H980L820 646z" fill="url(#bars)"/>
          <path d="M820 611l5 3v36l-5-3z"/>
          <path d="M820 611L988 714" stroke="#000" stroke-width="3"/><path d="M822 612L988 714" stroke="#fff"/>
          <path d="M820.500 646L980 744V753L820.500 655z" fill="#4a7ad8" fill-opacity=".92" stroke="#0038bc"/>
          <use href="#landing" y="436"/>
        </g>
        <g stroke="#0038bc" shape-rendering="crispEdges" stroke-dasharray="9 9">
          <path d="M814 238.500H1020M814 853.500H1020M814.500 237V854M1019.500 237V854"/>
        </g>
        <g fill="#f00" style="filter:drop-shadow(4px 3px 3px rgba(0,0,0,.35))">
          <path d="M573 658L582 682H575L574 840H570L571 682H565z"/>
        </g>
      </g>
    </svg>
  </section>
</main>
</body>
</html>
